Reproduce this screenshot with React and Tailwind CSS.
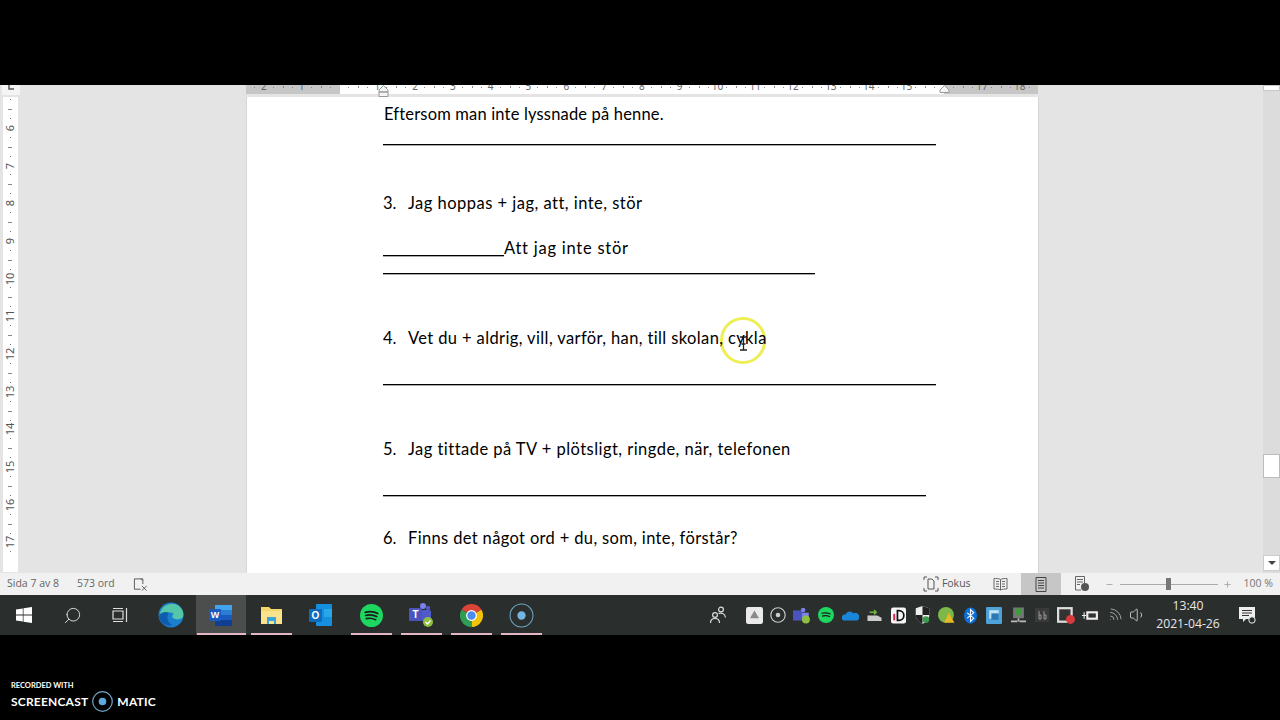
import React from 'react';
import { Search, Minus, Plus, Wifi, Volume1 } from 'lucide-react';

const docFont = { fontFamily: '"Lato", "Open Sans", sans-serif' };
const uiFont = { fontFamily: '"Open Sans", sans-serif' };

const topNums = ['2', '1', '', '1', '2', '3', '4', '5', '6', '7', '8', '9', '10', '11', '12', '13', '14', '15', '', '17', '18'];
const sideNums = ['6', '7', '8', '9', '10', '11', '12', '13', '14', '15', '16', '17'];

const TopRuler = () => (
  <div className="relative h-[9px] w-[792px]">
    <div className="relative h-full overflow-hidden bg-[#c6c6c6]">
      <div className="absolute left-[94px] top-0 h-full w-[604px] bg-white" />
      <div className="absolute left-[-1px] top-[-5px] flex">
        {topNums.map((n, i) => (
          <div key={i} className="relative flex h-[14px] w-[37.8px] justify-center text-[10px] leading-[12px] text-[#666]">
            {n}
            <div className="absolute left-0 top-[6px] h-[2px] w-[1px] bg-[#888]" />
            <div className="absolute left-[9px] top-[7px] h-[1px] w-[1px] bg-[#888]" />
            <div className="absolute right-[9px] top-[7px] h-[1px] w-[1px] bg-[#888]" />
          </div>
        ))}
      </div>
    </div>
    <svg className="absolute left-[132px] top-0" width="11" height="12" viewBox="0 0 11 12" fill="#f4f4f4" stroke="#999">
      <path d="M5.500 .5L10 5V7H1V5zM1 7H10V11.500H1z" />
    </svg>
    <svg className="absolute left-[693px] top-0" width="11" height="8" viewBox="0 0 11 8" fill="#f4f4f4" stroke="#999">
      <path d="M5.500 .5L10 5V7.500H1V5z" />
    </svg>
  </div>
);

const SideRuler = () => (
  <div className="relative mt-[2px] flex h-[475px] w-[15px] flex-col items-center overflow-hidden bg-white pt-[12px]">
    <div className="absolute left-[7px] top-[2px] h-[1px] w-[1px] bg-[#777]" />
    {sideNums.map((n) => (
      <div key={n} className="relative flex h-[37.7px] w-full shrink-0 items-center justify-center">
        <span className="-rotate-90 text-[11px] leading-[12px] text-[#555]">{n}</span>
        <div className="absolute left-[5px] top-0 h-[1px] w-[4px] bg-[#888]" />
        <div className="absolute left-[7px] top-[9px] h-[1px] w-[1px] bg-[#777]" />
        <div className="absolute bottom-[9px] left-[7px] h-[1px] w-[1px] bg-[#777]" />
      </div>
    ))}
  </div>
);

const Line = ({ w, className = '' }) => (
  <div className={`h-[2px] border-b border-b-[#aaa] bg-black ${className}`} style={{ width: w }} />
);

const Item = ({ n, text, className = '' }) => (
  <div className="flex h-[20px] items-center text-[16.500px] leading-[20px] text-black">
    <span className="w-[25px]">{n}.</span>
    <span className={className}>{text}</span>
  </div>
);

const Page = () => (
  <div className="relative h-[476px] w-[793px] border-x border-[#d6d6d6] bg-white pl-[136px] pt-[7px]" style={docFont}>
    <div className="h-[20px] pl-[1px] text-[16.500px] leading-[20px] tracking-[0.17px] text-black">Eftersom man inte lyssnade på henne.</div>
    <Line w={553} className="mt-[20px]" />
    <div className="mt-[47px]"><Item n="3" text="Jag hoppas + jag, att, inte, stör" className="tracking-[0.48px]" /></div>
    <div className="mt-[25px] flex h-[20px] items-end text-[16.500px] leading-[20px] text-black">
      <div className="mb-[1px] h-[2px] w-[121px] border-b border-b-[#aaa] bg-black" />
      <span className="tracking-[0.76px]">Att jag inte stör</span>
    </div>
    <Line w={432} className="mt-[15px]" />
    <div className="mt-[53px]"><Item n="4" text="Vet du + aldrig, vill, varför, han, till skolan, cykla" className="relative z-10 tracking-[0.38px]" /></div>
    <Line w={553} className="mt-[36px]" />
    <div className="mt-[53px]"><Item n="5" text="Jag tittade på TV + plötsligt, ringde, när, telefonen" className="tracking-[0.46px]" /></div>
    <Line w={543} className="mt-[36px]" />
    <div className="mt-[31px]"><Item n="6" text="Finns det något ord + du, som, inte, förstår?" className="tracking-[0.35px]" /></div>

    {/* cursor highlight */}
    <div className="absolute left-[473px] top-[220px] flex h-[47px] w-[46px] items-center justify-center rounded-full border-[3px] border-[#eeee55]">
      <svg className="mt-[6px]" width="11" height="15" viewBox="0 0 11 15" fill="none" stroke="#222" strokeWidth="1.300">
        <path d="M2 1h2.500c.6 0 1 .4 1 1v11c0 .6.4 1 1 1H9M9 1H6.500c-.6 0-1 .4-1 1M2 14h2.500c.6 0 1-.4 1-1M3.500 8h4" />
      </svg>
    </div>
  </div>
);

const Scrollbar = () => (
  <div className="flex w-[17px] shrink-0 flex-col bg-[#dcdcdc]">
    <div className="h-[6px] border border-[#c8c8c8] bg-white" />
    <div className="mt-[363px] h-[24px] border border-[#bcbcbc] bg-white" />
    <div className="mt-[77px] flex h-[16px] items-center justify-center border border-[#ccc] bg-white">
      <div className="h-0 w-0 border-x-[4px] border-t-[4px] border-x-transparent border-t-[#444]" />
    </div>
  </div>
);

const StatusBar = () => (
  <div className="flex h-[22px] items-center bg-[#f1f1f1] pl-[7px] text-[10.500px] text-[#666]" style={uiFont}>
    <span>Sida 7 av 8</span>
    <span className="ml-[18px]">573 ord</span>
    <svg className="ml-[18px]" width="15" height="15" viewBox="0 0 16 15" fill="none" stroke="#555" strokeWidth="1">
      <path d="M8 12.500H1.500V1.500H10.500V7" />
      <path d="M8 1.500l2 1.500M9.500 9l5 5M14.500 9l-5 5" />
    </svg>
    <div className="ml-auto flex h-full items-center">
      <svg width="16" height="16" viewBox="0 0 16 16" fill="none" stroke="#555" strokeWidth="1">
        <path d="M1 4V1H4M12 1h3v3M15 12v3h-3M4 15H1v-3" />
        <path d="M5 3h4l2 2v8H5z" />
      </svg>
      <span className="ml-[3px] text-[#555]">Fokus</span>
      <svg className="ml-[22px]" width="15" height="14" viewBox="0 0 15 14" fill="none" stroke="#666" strokeWidth="1">
        <path d="M7.500 2.500C6 1.500 3 1.500 1 1.500V12c2 0 5 0 6.500 1 1.500-1 4.500-1 6.500-1V1.500c-2 0-5 0-6.500 1zM7.500 2.500V13M3 4.500h3M3 7h3M3 9.500h3M9 4.500h3M9 7h3M9 9.500h3" />
      </svg>
      <div className="ml-[13px] flex h-full w-[40px] items-center justify-center bg-[#c6c6c6]">
        <svg width="12" height="15" viewBox="0 0 12 15" fill="none" stroke="#444" strokeWidth="1">
          <path d="M1 .5h10v14H1zM3 3.500h6M3 6h6M3 8.500h6M3 11h6" />
        </svg>
      </div>
      <svg className="ml-[13px]" width="16" height="16" viewBox="0 0 16 16" fill="none" stroke="#666" strokeWidth="1">
        <path d="M7 14H1.500V.5h9V7M3 3.500h6M3 6h6M3 8.500h3" />
        <circle cx="11" cy="11" r="4" fill="#555" stroke="none" />
      </svg>
      <Minus className="ml-[15px]" size={9} color="#999" />
      <div className="relative ml-[6px] h-[1px] w-[98px] bg-[#aaa]">
        <div className="absolute left-[46px] top-[-6px] h-[12px] w-[5px] bg-[#777]" />
      </div>
      <Plus className="ml-[5px]" size={9} color="#999" />
      <span className="ml-[12px] mr-[7px] text-[#777]">100 %</span>
    </div>
  </div>
);

const AppIcon = ({ children, underline, active }) => (
  <div className={`relative flex h-[40px] w-[50px] items-center justify-center ${active ? 'bg-[#4b4e4d]' : ''}`}>
    {children}
    {underline && <div className={`absolute bottom-0 h-[2px] bg-[#e3b6c8] ${active ? 'left-[1px] right-0' : 'left-[5px] right-[4px]'}`} />}
  </div>
);

const Tray = ({ children }) => <div className="flex h-[40px] w-[24px] items-center justify-center">{children}</div>;

const Taskbar = () => (
  <div className="flex h-[40px] items-center bg-[#2a2e2d]">
    <div className="flex h-[40px] w-[48px] items-center justify-center">
      <svg width="16" height="16" viewBox="0 0 16 16" fill="#fff"><path d="M0 2.500l6.800-1V7.600H0zM7.500 1.300L16 0v7.600H7.500zM0 8.400h6.800v6.100L0 13.500zM7.500 8.400H16V16l-8.500-1.200z" /></svg>
    </div>
    <div className="flex h-[40px] w-[48px] items-center justify-center">
      <Search className="-scale-x-100" size={19} color="#ddd" strokeWidth={1.2} />
    </div>
    <div className="flex h-[40px] w-[48px] items-center justify-center">
      <svg width="16" height="16" viewBox="0 0 16 16" fill="none" stroke="#ddd" strokeWidth="1.200"><path d="M1 4h10v8H1zM1 1.500h10M1 14.500h10M14.500 1v14" /></svg>
    </div>
    <div className="w-[2px]" />
    <AppIcon>
      <svg width="26" height="26" viewBox="0 0 26 26">
        <circle cx="13" cy="13" r="12.500" fill="#1b7fd0" />
        <path d="M2 11C4 3 14-1 21 4c4 3 5 8 4 11-2 3-8 3-10 1-1-1-1-3 1-4-3-2-8-2-10 1-1 2-2 2-4-2z" fill="#53c7a8" />
        <path d="M1 14c2-4 7-5 10-3-3 3-2 9 3 12C8 25 1 21 1 14z" fill="#0f5cad" />
      </svg>
    </AppIcon>
    <AppIcon underline active>
      <svg width="24" height="23" viewBox="0 0 24 23">
        <rect x="6" y="1" width="17" height="21" rx="1" fill="#2b7cd3" />
        <rect x="6" y="1" width="17" height="5" fill="#41a5ee" />
        <rect x="6" y="11" width="17" height="5" fill="#185abd" />
        <rect x="6" y="16" width="17" height="6" fill="#103f91" />
        <rect x="0" y="5" width="12" height="12" rx="1" fill="#185abd" />
        <text x="6" y="14" fontSize="9" fontWeight="700" fill="#fff" textAnchor="middle" fontFamily="Liberation Sans, sans-serif">W</text>
      </svg>
    </AppIcon>
    <AppIcon underline>
      <svg width="21" height="18" viewBox="0 0 21 18">
        <path d="M0 1h8l2 2h11v15H0z" fill="#f3d76a" />
        <rect x="0" y="5" width="21" height="13" fill="#fbe38e" />
        <path d="M6 11h9v7h-2v-3H8v3H6z" fill="#3aa4dc" />
      </svg>
    </AppIcon>
    <AppIcon>
      <svg width="24" height="24" viewBox="0 0 24 24">
        <rect x="7" y="1" width="16" height="22" rx="1" fill="#1490df" />
        <rect x="15" y="6" width="8" height="8" fill="#28a8ea" />
        <rect x="0" y="6" width="13" height="13" rx="1" fill="#0f6cbd" />
        <text x="6.500" y="16" fontSize="10" fontWeight="700" fill="#fff" textAnchor="middle" fontFamily="Liberation Sans, sans-serif">O</text>
      </svg>
    </AppIcon>
    <AppIcon underline>
      <svg width="23" height="23" viewBox="0 0 22 22">
        <circle cx="11" cy="11" r="11" fill="#1ed760" />
        <path d="M5 8c4-1 8-1 12 1M5.500 11c3.500-1 7-.7 10.500 1M6 14c3-.7 6-.5 9 1" fill="none" stroke="#1b1b1b" strokeWidth="1.600" strokeLinecap="round" />
      </svg>
    </AppIcon>
    <AppIcon underline>
      <svg width="26" height="26" viewBox="0 0 26 26">
        <circle cx="15" cy="4" r="3" fill="#7b83eb" />
        <circle cx="20" cy="6" r="2.200" fill="#5059c9" />
        <rect x="13" y="8" width="10" height="11" rx="2" fill="#5059c9" />
        <rect x="1" y="6" width="13" height="13" rx="1" fill="#4b53bc" />
        <text x="7.500" y="16" fontSize="10" fontWeight="700" fill="#fff" textAnchor="middle" fontFamily="Liberation Sans, sans-serif">T</text>
        <circle cx="20" cy="20" r="5" fill="#8fbf3f" />
        <path d="M17.500 20l2 2 3-3.500" fill="none" stroke="#fff" strokeWidth="1.200" />
      </svg>
    </AppIcon>
    <AppIcon underline>
      <svg width="23" height="23" viewBox="0 0 22 22">
        <path d="M11 11L1.470 5.500A11 11 0 0 1 20.530 5.500z" fill="#db4437" />
        <path d="M11 11L20.530 5.500A11 11 0 0 1 11 22z" fill="#f4c20d" />
        <path d="M11 11L11 22A11 11 0 0 1 1.470 5.500z" fill="#2f9e52" />
        <circle cx="11" cy="11" r="5.200" fill="#fff" />
        <circle cx="11" cy="11" r="4" fill="#4a8cf0" />
      </svg>
    </AppIcon>
    <AppIcon underline>
      <svg width="25" height="25" viewBox="0 0 24 24">
        <circle cx="12" cy="12" r="11" fill="none" stroke="#6fa7c4" strokeWidth="1" />
        <circle cx="12" cy="12" r="4" fill="#74b4de" />
      </svg>
    </AppIcon>
    <div className="ml-auto flex h-full items-center pr-[12px]">
      <div className="mr-[12px]">
        <Tray>
          <svg width="18" height="18" viewBox="0 0 18 18" fill="none" stroke="#ddd" strokeWidth="1.200">
            <circle cx="6" cy="9" r="2.400" />
            <path d="M1.500 17c0-3 1.500-4.500 4.500-4.500S10.500 14 10.500 17" />
            <circle cx="12" cy="3.500" r="2.400" />
            <path d="M9.500 7.500C12 6.500 16 7 16.500 11.500" />
          </svg>
        </Tray>
      </div>
      <Tray><svg width="17" height="17" viewBox="0 0 15 15"><rect width="15" height="15" rx="2" fill="#eaeaea" /><path d="M7.500 3l4 7H3.500z" fill="#8a8a8a" /></svg></Tray>
      <Tray><svg width="16" height="16" viewBox="0 0 14 14"><circle cx="7" cy="7" r="6.300" fill="none" stroke="#ccc" /><circle cx="7" cy="7" r="2" fill="#ccc" /></svg></Tray>
      <Tray><svg width="18" height="17" viewBox="0 0 16 15"><rect x="0" y="3" width="8" height="9" fill="#4b53bc" /><rect x="8" y="5" width="6" height="7" fill="#7b83eb" /><circle cx="9" cy="2.500" r="2" fill="#7b83eb" /><circle cx="11.500" cy="11" r="3.500" fill="#8fbf3f" /></svg></Tray>
      <Tray><svg width="16" height="16" viewBox="0 0 14 14"><circle cx="7" cy="7" r="7" fill="#1ed760" /><path d="M3 5.500c3-.7 5-.7 8 .7M3.500 8c2-.5 5-.5 7 .6" stroke="#1b1b1b" fill="none" /></svg></Tray>
      <Tray><svg width="17" height="11" viewBox="0 0 15 10"><path d="M1 9.500a3 3 0 0 1 2-5.500 4 4 0 0 1 7-1 3 3 0 0 1 3.500 6.500z" fill="#1a86d9" /></svg></Tray>
      <Tray><svg width="17" height="13" viewBox="0 0 15 12"><path d="M1 6h9l4 2v3H1z" fill="#ccc" /><path d="M3 3h6M7 1l2 2-2 2" stroke="#6db33f" fill="none" strokeWidth="1.500" /></svg></Tray>
      <Tray><svg width="15" height="17" viewBox="0 0 14 15"><rect width="14" height="15" rx="2" fill="#f5f5f5" /><path d="M6 3h1.500a4.500 4.500 0 0 1 0 9H6z" fill="none" stroke="#111" strokeWidth="1.600" /><path d="M3 6v6" stroke="#d6204a" strokeWidth="1.800" /></svg></Tray>
      <Tray><svg width="15" height="18" viewBox="0 0 13 16"><path d="M.5 2L6.500 0l6 2v6c0 4-3 6-6 8-3-2-6-4-6-8z" fill="#eee" /><path d="M6.500 0l6 2v6h-6zM6.500 8v8c-3-2-6-4-6-8z" fill="#222" /><circle cx="9.500" cy="12" r="3" fill="#3d9b4f" /></svg></Tray>
      <Tray><svg width="17" height="17" viewBox="0 0 15 15"><circle cx="7" cy="7" r="7" fill="#7cb84a" /><path d="M9.500 5l5 9h-9z" fill="#e9b824" /></svg></Tray>
      <Tray><svg width="13" height="17" viewBox="0 0 12 15"><ellipse cx="6" cy="7.500" rx="6" ry="7.500" fill="#0a6fd8" /><path d="M3 5l6 5-3 3V2l3 3-6 5" stroke="#fff" fill="none" /></svg></Tray>
      <Tray><svg width="16" height="17" viewBox="0 0 15 16"><rect width="15" height="16" rx="1" fill="#4fa3d8" /><rect x="3" y="3" width="9" height="8" fill="#bfe3f5" /><rect x="5" y="6" width="7" height="6" fill="#2d78b5" /></svg></Tray>
      <Tray><svg width="15" height="17" viewBox="0 0 14 15"><rect x="2" y="0" width="10" height="10" fill="#777" /><rect x="4" y="1" width="6" height="6" fill="#3f9b3f" /><path d="M0 13h6M8 13h6M7 10v3" stroke="#bbb" strokeWidth="1.500" /></svg></Tray>
      <Tray><svg width="14" height="14" viewBox="0 0 14 14"><rect width="14" height="14" fill="#3a3a3a" /><path d="M4 3v8h2V7H4M9 3v8h2V7H9" stroke="#999" fill="none" /></svg></Tray>
      <Tray><svg width="18" height="17" viewBox="0 0 16 15"><rect x="0" y="0" width="14" height="14" fill="#ddd" /><rect x="2" y="2" width="10" height="10" fill="#333" /><circle cx="12" cy="11" r="4" fill="#d83b3b" /></svg></Tray>
      <Tray><svg width="17" height="11" viewBox="0 0 16 10"><rect x="4" y="1" width="11" height="8" fill="#eee" /><path d="M0 5h4M2 2v6" stroke="#eee" /><rect x="6" y="3" width="7" height="4" fill="#333" /></svg></Tray>
      <Tray><Wifi className="rotate-45" size={17} color="#bbb" strokeWidth={1.1} /></Tray>
      <Tray><Volume1 size={18} color="#ddd" strokeWidth={1.1} /></Tray>
      <div className="flex w-[76px] flex-col items-center text-[12.200px] leading-[18px] text-[#e8e8e8]" style={uiFont}>
        <span>13:40</span>
        <span>2021-04-26</span>
      </div>
      <div className="flex w-[42px] justify-center">
        <svg width="18" height="18" viewBox="0 0 18 18">
          <path d="M1 1h16v12H8l-3 3v-3H1z" fill="#eee" />
          <path d="M4 4.500h10M4 7h10M4 9.500h7" stroke="#333" />
          <circle cx="14" cy="14" r="3.200" fill="#2a2e2d" stroke="#eee" />
        </svg>
      </div>
    </div>
  </div>
);

export default function App() {
  return (
    <div className="flex h-[720px] w-[1280px] flex-col overflow-hidden bg-black">
      <div className="h-[85px] shrink-0" />
      <div className="flex h-[488px] shrink-0 bg-[#e4e4e4]">
        <div className="flex w-[21px] shrink-0 flex-col items-center">
          <div className="flex h-[10px] w-[18px] justify-center bg-[#f4f4f4]">
            <svg width="7" height="5" viewBox="0 0 7 5" fill="none" stroke="#555" strokeWidth="1.500"><path d="M2 0v4h5" /></svg>
          </div>
          <SideRuler />
        </div>
        <div className="flex flex-1 flex-col items-center">
          <TopRuler />
          <div className="mt-[3px] w-[792px]"><Page /></div>
        </div>
        <Scrollbar />
      </div>
      <StatusBar />
      <Taskbar />
      <div className="flex flex-1 flex-col pl-[11px] pt-[46px] text-white" style={{ fontFamily: '"Lato", sans-serif' }}>
        <div className="text-[7.500px] font-bold leading-[10px]">RECORDED WITH</div>
        <div className="flex items-center text-[12px] font-bold tracking-[0.2px]">
          <span>SCREENCAST</span>
          <svg className="mx-[4px]" width="21" height="21" viewBox="0 0 21 21">
            <circle cx="10.500" cy="10.500" r="9.800" fill="none" stroke="#6fa7c4" strokeWidth="1.200" />
            <circle cx="10.500" cy="10.500" r="3.800" fill="#5fa8dc" />
          </svg>
          <span>MATIC</span>
        </div>
      </div>
    </div>
  );
}
